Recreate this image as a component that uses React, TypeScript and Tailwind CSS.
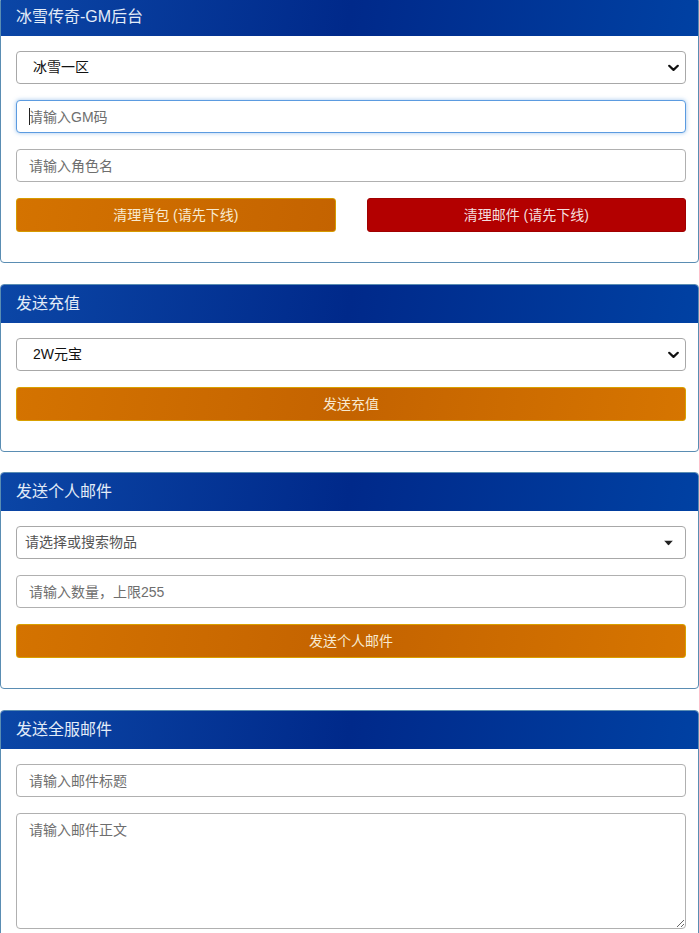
import React from "react";

const font = "font-['Liberation_Sans','Noto_Sans_CJK_SC',sans-serif]";

function Card({ title, children, mt }: { title: string; children: React.ReactNode; mt: string }) {
  return (
    <div className={`${mt} overflow-hidden rounded-[4px] border border-[#5a8db3] bg-white`}>
      <div className="flex h-[38px] items-center bg-[linear-gradient(100deg,#0b46a6_0%,#00298a_50%,#0041a3_100%)] pl-[15px] text-[16px] text-[#e3ecf8]">
        {title}
      </div>
      <div className="flex flex-col gap-4 pb-[30px] pl-[15px] pr-[12px] pt-[15px]">{children}</div>
    </div>
  );
}

function Chevron() {
  return (
    <svg
      className="pointer-events-none absolute right-[6px] top-1/2 -translate-y-1/2"
      width="11"
      height="7"
      viewBox="0 0 11 7"
    >
      <path d="M1.2 1.2 L5.5 5.4 L9.8 1.2" fill="none" stroke="#111" strokeWidth="2.2" strokeLinecap="round" strokeLinejoin="round" />
    </svg>
  );
}

function Select({ value }: { value: string }) {
  return (
    <div className="relative h-[33px] rounded-[4px] border border-[#a8a8a8] bg-white">
      <div className="flex h-full items-center pl-4 text-[14px] text-[#111]">{value}</div>
      <Chevron />
    </div>
  );
}

function Input({ placeholder, focused }: { placeholder: string; focused?: boolean }) {
  return (
    <div className="relative">
      <input
        readOnly
        placeholder={placeholder}
        className={`h-[33px] w-full rounded-[4px] border bg-white pl-3 text-[14px] outline-none placeholder:text-[#6e6e6e] ${
          focused
            ? "border-[#5b9be0] shadow-[0_0_4px_rgba(80,150,220,0.55)]"
            : "border-[#b0b0b0]"
        }`}
      />
      {focused && <span className="absolute left-[13px] top-[8px] h-[17px] w-px bg-[#222]" />}
    </div>
  );
}

function OrangeButton({ label }: { label: string }) {
  return (
    <button className="h-[34px] w-full rounded-[3px] border border-[#d9a000] bg-[linear-gradient(100deg,#d47300_0%,#c46300_50%,#d67500_100%)] text-[14px] text-[#f8ead0]">
      {label}
    </button>
  );
}

export default function App() {
  return (
    <div className={`${font} h-[933px] w-[699px] overflow-hidden bg-white`}>
      <Card title="冰雪传奇-GM后台" mt="-mt-[3px]">
        <Select value="冰雪一区" />
        <Input placeholder="请输入GM码" focused />
        <Input placeholder="请输入角色名" />
        <div className="flex gap-[31px]">
          <button className="h-[34px] flex-1 rounded-[3px] border border-[#d69a00] bg-[linear-gradient(100deg,#d47300_0%,#c46300_100%)] text-[14px] text-[#f8ead0]">
            清理背包 (请先下线)
          </button>
          <button className="h-[34px] flex-1 rounded-[3px] border border-[#a00000] bg-[#b30000] text-[14px] text-[#f4dede]">
            清理邮件 (请先下线)
          </button>
        </div>
      </Card>

      <Card title="发送充值" mt="mt-[21px]">
        <Select value="2W元宝" />
        <OrangeButton label="发送充值" />
      </Card>

      <Card title="发送个人邮件" mt="mt-[20px]">
        <div className="relative h-[33px] rounded-[4px] border border-[#a8a8a8] bg-white">
          <div className="flex h-full items-center pl-2 text-[14px] text-[#555]">请选择或搜索物品</div>
          <svg className="absolute right-[12px] top-1/2 -translate-y-1/2" width="9" height="5" viewBox="0 0 9 5">
            <path d="M0 0 L9 0 L4.5 5 Z" fill="#222" />
          </svg>
        </div>
        <Input placeholder="请输入数量，上限255" />
        <OrangeButton label="发送个人邮件" />
      </Card>

      <Card title="发送全服邮件" mt="mt-[21px]">
        <Input placeholder="请输入邮件标题" />
        <textarea
          readOnly
          placeholder="请输入邮件正文"
          className="h-[116px] w-full rounded-[4px] border border-[#b0b0b0] bg-white px-3 pt-[6px] text-[14px] outline-none placeholder:text-[#6e6e6e]"
        />
      </Card>
    </div>
  );
}
